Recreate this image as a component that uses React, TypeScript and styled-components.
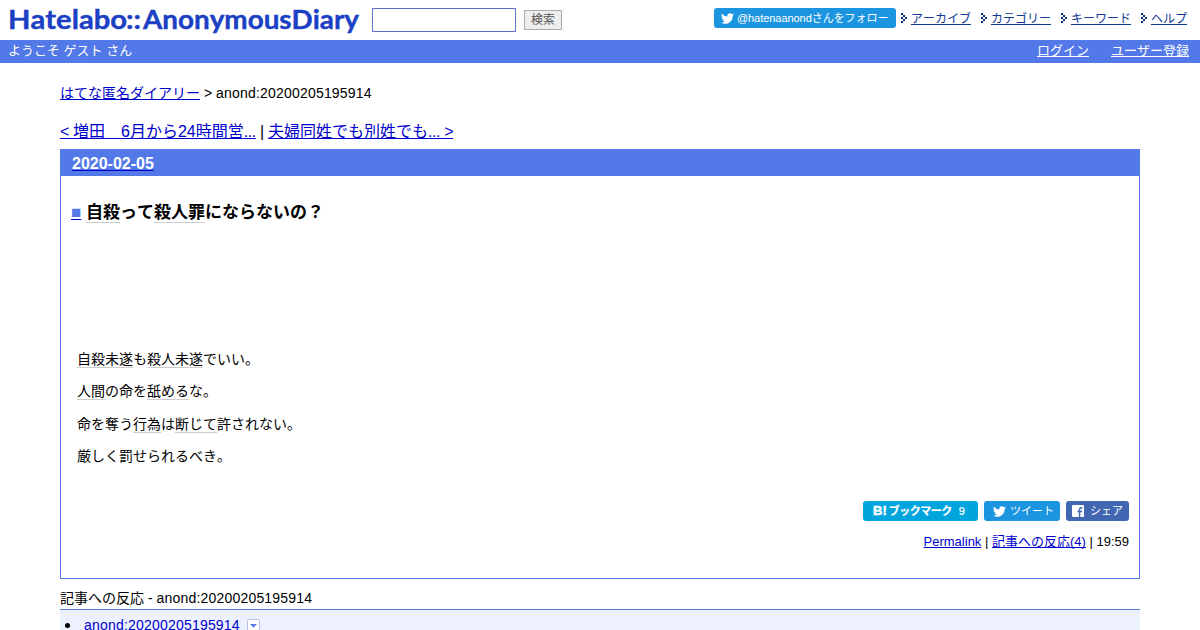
import React from "react";
import { createGlobalStyle, styled } from "styled-components";

const menuItems = ["アーカイブ", "カテゴリー", "キーワード", "ヘルプ"];

function Bird({ size }: { size: number }) {
  return (
    <svg width={size} height={size} viewBox="0 0 24 24" fill="#fff">
      <path d="M23.95 4.57a10 10 0 0 1-2.82.77 4.96 4.96 0 0 0 2.16-2.72c-.95.55-2 .95-3.13 1.18a4.92 4.92 0 0 0-8.38 4.48A13.93 13.93 0 0 1 1.64 3.16a4.92 4.92 0 0 0 1.52 6.57 4.9 4.9 0 0 1-2.23-.61v.06a4.92 4.92 0 0 0 3.95 4.83 5 5 0 0 1-2.21.08 4.94 4.94 0 0 0 4.6 3.42A9.87 9.87 0 0 1 0 19.54a13.99 13.99 0 0 0 7.55 2.21c9.06 0 14-7.5 14-13.98 0-.21 0-.42-.02-.63a9.94 9.94 0 0 0 2.46-2.55z" />
    </svg>
  );
}

function Arrow() {
  return (
    <svg width="6" height="10" viewBox="0 0 6 10" fill="#0b2a80" shapeRendering="crispEdges">
      <path d="M0 0h2v2H0zM2 2h2v2H2zM4 4h2v2H4zM2 6h2v2H2zM0 8h2v2H0zM0 4h2v2H0z" />
    </svg>
  );
}

export default function App() {
  return (
    <>
      <GlobalStyle />
      <Header>
        <Logo width="352" height="36" viewBox="0 0 352 36">
          <text x="-1" y="25" textLength="119" lengthAdjust="spacingAndGlyphs">
            Hatelabo
          </text>
          <text x="117" y="25" textLength="15" lengthAdjust="spacingAndGlyphs">
            ::
          </text>
          <text x="134" y="25" textLength="216" lengthAdjust="spacingAndGlyphs">
            AnonymousDiary
          </text>
        </Logo>
        <SearchInput type="text" />
        <SearchButton>検索</SearchButton>
        <Menu>
          <FollowButton>
            <Bird size={13} />
            @hatenaanondさんをフォロー
          </FollowButton>
          {menuItems.map((item) => (
            <MenuItem key={item}>
              <Arrow />
              <a href="#">{item}</a>
            </MenuItem>
          ))}
        </Menu>
      </Header>
      <GuestBar>
        <span>ようこそ ゲスト さん</span>
        <GuestLinks>
          <a href="#">ログイン</a>
          <a href="#">ユーザー登録</a>
        </GuestLinks>
      </GuestBar>

      <Content>
        <Breadcrumb>
          <a href="#">はてな匿名ダイアリー</a> &gt; <Latin $spacing={0.2}>anond:20200205195914</Latin>
        </Breadcrumb>
        <Pager>
          <a href="#">
            <Latin $spacing={-0.4}>&lt; </Latin>増田　6月から24時間営<Latin $spacing={-0.4}>...</Latin>
          </a>
          <Latin $spacing={-0.3}> | </Latin>
          <a href="#">
            夫婦同姓でも別姓でも<Latin $spacing={-0.4}>... &gt;</Latin>
          </a>
        </Pager>

        <Day>
          <DayTitle>
            <a href="#">
              <span>2020-02-05</span>
            </a>
          </DayTitle>
          <Section>
            <SectionTitle>
              <a href="#">
                <Square>■</Square>
              </a>{" "}
              <Keyword>自殺</Keyword>って<Keyword>殺人罪</Keyword>にならないの？
            </SectionTitle>
            <Body>
              <p>
                <Keyword>自殺未遂</Keyword>も<Keyword>殺人未遂</Keyword>でいい。
              </p>
              <p>
                <Keyword>人間</Keyword>の命を<Keyword>舐める</Keyword>な。
              </p>
              <p>
                命を奪う<Keyword>行為</Keyword>は<Keyword>断じて</Keyword>許されない。
              </p>
              <p>厳しく罰せられるべき。</p>
            </Body>
            <ShareRow>
              <ShareButton $color="#00a5de" $width={115}>
                <BookmarkMark>B!</BookmarkMark>
                <BookmarkLabel>ブックマーク</BookmarkLabel>
                <BookmarkCount>9</BookmarkCount>
              </ShareButton>
              <ShareButton $color="#1b95e0" $width={76}>
                <Bird size={13} />
                <TweetLabel>ツイート</TweetLabel>
              </ShareButton>
              <ShareButton $color="#4267b2" $width={63}>
                <svg width="12" height="12" viewBox="0 0 12 12">
                  <rect width="12" height="12" rx="1" fill="#fff" />
                  <path d="M10.4 2.7H9.4Q7.6 2.7 7.6 4.5V12M5.4 6.4h4.7" fill="none" stroke="#4267b2" strokeWidth="1.5" />
                </svg>
                <FacebookLabel>シェア</FacebookLabel>
              </ShareButton>
            </ShareRow>
            <SectionFooter>
              <a href="#">Permalink</a> | <a href="#">記事への反応(4)</a> | 19:59
            </SectionFooter>
          </Section>
        </Day>

        <ReactionTitle>
          記事への反応 - <Latin $spacing={0.2}>anond:20200205195914</Latin>
        </ReactionTitle>
        <ReactionList>
          <Bullet />
          <a href="#">
            <Latin $spacing={0.2}>anond:20200205195914</Latin>
          </a>
          <svg width="13" height="13" viewBox="0 0 13 13">
            <rect x="0.5" y="0.5" width="12" height="12" rx="1" fill="#fff" stroke="#b5c3e8" />
            <path d="M3 5h7L6.5 8.7z" fill="#5279e7" />
          </svg>
        </ReactionList>
      </Content>
    </>
  );
}

const GlobalStyle = createGlobalStyle`
  * {
    box-sizing: border-box;
  }
  html, body {
    margin: 0;
    overflow: hidden;
  }
  body {
    background: #fff;
    color: #000;
    font-family: "Liberation Sans", "Noto Sans CJK JP", sans-serif;
    font-size: 14px;
    font-kerning: none;
  }
  #root {
    height: 630px;
    overflow: hidden;
  }
  a {
    color: #0000cc;
    text-decoration-skip-ink: none;
  }
  svg {
    flex-shrink: 0;
  }
`;
const Header = styled.header`
  height: 40px;
  padding: 0 13px 0 9px;
  display: flex;
  align-items: flex-start;
`;
const Logo = styled.svg`
  margin-top: 4px;
  overflow: visible;

  text {
    font-family: Lato, sans-serif;
    font-size: 26.5px;
    font-weight: bold;
    fill: #1b40c4;
    stroke: #1b40c4;
    stroke-width: 0.4px;
  }
`;
const SearchInput = styled.input`
  width: 144px;
  height: 24px;
  margin: 8px 8px 0 11px;
  border: 1px solid #5872cb;
  outline: none;
`;
const SearchButton = styled.button`
  width: 38px;
  height: 20px;
  margin-top: 10px;
  padding: 0;
  border: 1px solid #aaa;
  background: #eee;
  color: #555;
  font: 12px/16px "Liberation Sans", "Noto Sans CJK JP", sans-serif;
`;
const Menu = styled.div`
  margin: 8px 0 0 auto;
  display: flex;
`;
const FollowButton = styled.div`
  width: 182px;
  height: 20px;
  margin-right: 5px;
  padding-left: 7px;
  border-radius: 3px;
  background: #1b95e0;
  color: #fff;
  font-size: 11px;
  line-height: 20px;
  letter-spacing: -0.05px;
  white-space: nowrap;
  display: flex;
  align-items: center;
  gap: 3px;
`;
const MenuItem = styled.div`
  height: 20px;
  font-size: 12px;
  line-height: 20px;
  display: flex;
  align-items: center;
  gap: 4px;

  & + & {
    margin-left: 10px;
  }
  a {
    padding-top: 1px;
    color: #0d3894;
  }
`;
const GuestBar = styled.div`
  height: 23px;
  padding: 0 11px 0 8px;
  background: #5279e7;
  color: #fff;
  font-size: 13px;
  line-height: 22px;
  display: flex;
  justify-content: space-between;
`;
const GuestLinks = styled.div`
  display: flex;
  gap: 22px;

  a {
    color: #fff;
  }
`;
const Content = styled.main`
  margin: 0 60px;
  padding-top: 21px;
`;
const Latin = styled.span<{ $spacing: number }>`
  letter-spacing: ${(p) => p.$spacing}px;
  white-space: pre;
`;
const Breadcrumb = styled.div`
  line-height: 18px;
`;
const Pager = styled.div`
  margin: 20px 0 7px;
  font-size: 16px;
  line-height: 20px;
`;
const Day = styled.div`
  height: 430px;
  border: 1px solid #5279e7;
`;
const DayTitle = styled.h2`
  height: 26px;
  margin: 0;
  padding-left: 11px;
  background: #5279e7;
  font-size: 16px;
  line-height: 27px;

  span {
    color: #fff;
  }
`;
const Section = styled.div`
  padding: 25px 10px 0;
`;
const SectionTitle = styled.h3`
  margin: 0;
  font-size: 17px;
  line-height: 24px;
`;
const Square = styled.span`
  color: #5279e7;
`;
const Keyword = styled.span`
  border-bottom: 1px solid #ccc;
`;
const Body = styled.div`
  height: 276px;
  padding: 124px 6px 0;

  p {
    margin: 0 0 12.4px;
    line-height: 20px;
  }
`;
const ShareRow = styled.div`
  display: flex;
  justify-content: flex-end;
  gap: 6px;
`;
const ShareButton = styled.div<{ $color: string; $width: number }>`
  width: ${(p) => p.$width}px;
  height: 20px;
  padding: 0 6px;
  border-radius: 3px;
  background: ${(p) => p.$color};
  color: #fff;
  font-size: 11px;
  line-height: 20px;
  white-space: nowrap;
  display: flex;
  align-items: center;

  > svg:first-child {
    margin-left: auto;
  }
`;
const BookmarkMark = styled.b`
  margin-left: 4px;
  font-size: 13px;
  -webkit-text-stroke: 0.5px #fff;
`;
const BookmarkLabel = styled.b`
  margin: 0 7px 0 2px;
  letter-spacing: -0.5px;
  -webkit-text-stroke: 0.15px #fff;
`;
const BookmarkCount = styled.span`
  -webkit-text-stroke: 0.2px #fff;
`;
const TweetLabel = styled.span`
  margin-left: 4px;
`;
const FacebookLabel = styled.span`
  margin-left: 6px;
`;
const SectionFooter = styled.div`
  margin-top: 11px;
  font-size: 13px;
  line-height: 20px;
  text-align: right;
`;
const ReactionTitle = styled.div`
  height: 30px;
  padding-top: 9px;
  line-height: 20px;
`;
const ReactionList = styled.div`
  height: 21px;
  padding: 7px 0 0 5px;
  border-top: 1px solid #5279cb;
  background: #edf1fd;
  line-height: 16px;
  display: flex;
  align-items: flex-start;

  a {
    margin: 0 7px 0 14px;
  }
  svg {
    margin-top: 2px;
  }
`;
const Bullet = styled.i`
  width: 5px;
  height: 5px;
  margin-top: 6px;
  border-radius: 50%;
  background: #000;
`;
